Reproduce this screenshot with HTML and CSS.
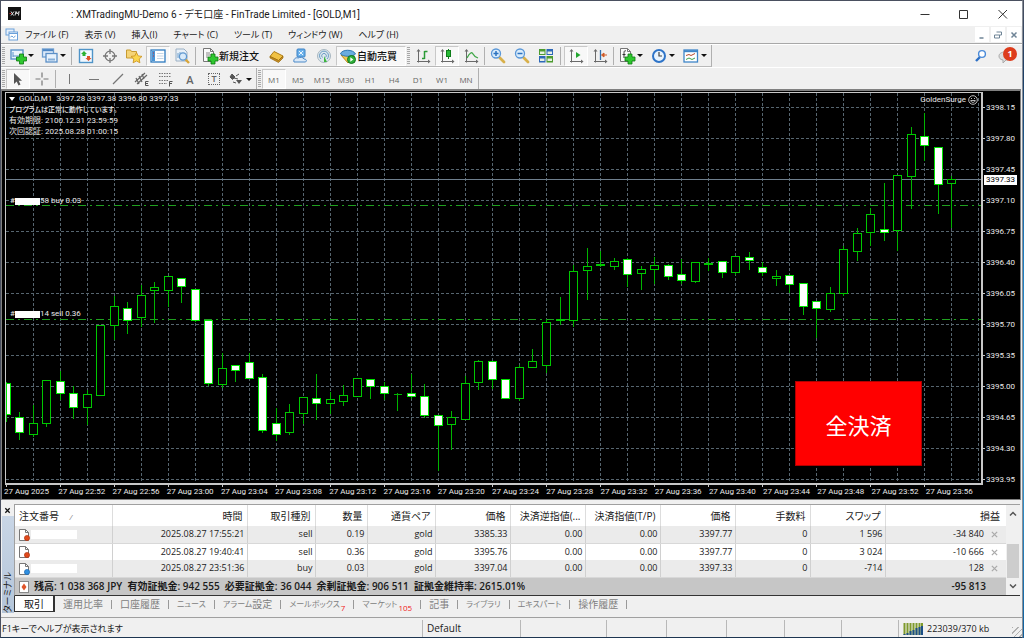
FILE: index.html
```html
<!DOCTYPE html>
<html lang="ja">
<head>
<meta charset="utf-8">
<title>XMTradingMU-Demo 6 - GOLD,M1</title>
<link rel="stylesheet" href="styles.css">
</head>
<body>
<svg class="defs" aria-hidden="true">
  <defs>
    <g id="plus"><path d="M9 7h4v3h3v4h-3v3H9v-3H6v-4h3z" fill="#2fc72f" stroke="#0c7a10" stroke-width=".8"/></g>
    <g id="axes"><path d="M4.500 3.500v12M3 14.500h12" fill="none" stroke="#6a6a6a"/><path d="M4.500 2l-2 2.500h4zM16.500 14.500l-2.500-2v4z" fill="#6a6a6a"/></g>
    <g id="sheet"><path d="M2.500 1.500h7l3 3v10h-10z" fill="#fafafa" stroke="#777"/><path d="M9.500 1.500v3h3" fill="none" stroke="#777"/></g>
    <g id="lens"><path d="M10.500 10.500l4.500 4.500" stroke="#d8b04a" stroke-width="2.800" stroke-linecap="round"/><circle cx="7" cy="6.500" r="4.500" fill="#d9ecfb" stroke="#5a97d8" stroke-width="1.300"/></g>
  </defs>
</svg>
<div class="window">
  <header class="titlebar">
    <svg class="logo" viewBox="0 0 13 13"><rect width="13" height="13" fill="#111"/><path d="M3 4.500l2.500 4M6 4.500l-3 4M7 8.500l1-4 1 2.500 2-2.500-.5 4" stroke="#ddd" fill="none"/><path d="M1.500 6.500h1.500" stroke="#d22"/></svg>
    <h1 class="title">: XMTradingMU-Demo 6 - デモ口座 - FinTrade Limited - [GOLD,M1]</h1>
    <div class="winbtns">
      <button aria-label="最小化"><svg viewBox="0 0 12 12"><path d="M1.500 6.500h9"/></svg></button>
      <button aria-label="最大化"><svg viewBox="0 0 12 12"><path d="M1.500 2.500h8v8h-8z"/></svg></button>
      <button aria-label="閉じる"><svg viewBox="0 0 12 12"><path d="M1.500 2l8.500 8.500M10 2L1.500 10.500"/></svg></button>
    </div>
  </header>

  <nav class="menubar">
    <svg class="mdi-icon" viewBox="0 0 13 13"><rect x="1" y="1" width="8" height="6" fill="#e8f1fb" stroke="#6aa0da"/><rect x="4" y="4" width="8.500" height="8" fill="#fff" stroke="#6aa0da"/><path d="M4 5.500h8" stroke="#6aa0da"/><path d="M5.500 9l1.500-1 1.500 1.500 2-1.500" fill="none" stroke="#6aa0da"/></svg>
    <button>ファイル (F)</button><button>表示 (V)</button><button>挿入(I)</button><button>チャート (C)</button><button>ツール (T)</button><button>ウィンドウ (W)</button><button>ヘルプ (H)</button>
    <div class="mdi-btns">
      <button aria-label="最小化"><svg viewBox="0 0 12 12"><path d="M3.500 9h4" stroke-width="1.500"/></svg></button>
      <button aria-label="元に戻す"><svg viewBox="0 0 12 12"><path d="M4.500 3h5v3h-2M2.500 6h5v3h-5z"/></svg></button>
      <button aria-label="閉じる"><svg viewBox="0 0 12 12"><path d="M3.500 3.500l5 5M8.500 3.500l-5 5" stroke-width="1.500"/></svg></button>
    </div>
  </nav>

  <div class="toolbar-row">
    <div class="toolbar">
      <span class="grip"></span>
      <button class="tool drop" aria-label="新規チャート"><svg viewBox="0 0 18 18"><rect x="2" y="3" width="12" height="9" fill="#eaf3fc" stroke="#5b93c9" stroke-width="1.400"/><path d="M4 10V5M4 9h8" stroke="#5b93c9"/><use href="#plus" x="1.500"/></svg></button>
      <button class="tool drop" aria-label="チャートの組表示"><svg viewBox="0 0 18 18"><rect x="1.500" y="2" width="11" height="8" fill="#dceafa" stroke="#6b9ccf" stroke-width="1.300"/><path d="M2 3.200h10" stroke="#4d86c4" stroke-width="2"/><rect x="5" y="6.500" width="11" height="8.500" fill="#e6f1fc" stroke="#5b8fc7" stroke-width="1.300"/><path d="M7 12.500h7" stroke="#86aed8" stroke-width="2"/></svg></button>
      <span class="sep"></span>
      <button class="tool" aria-label="気配値表示"><svg viewBox="0 0 18 18"><rect x="2.500" y="2.500" width="13" height="13" fill="#f2f9ff" stroke="#4f94c8" stroke-width="1.400"/><path d="M7 4l3 3H8.500v2h-3V7H4z" fill="#2cb234"/><path d="M11.500 14l-3-3H10V9h3v2h1.500z" fill="#e0542a"/></svg></button>
      <button class="tool" aria-label="データウィンドウ"><svg viewBox="0 0 18 18"><circle cx="9" cy="9" r="4.800" fill="none" stroke="#777" stroke-width="1.300"/><path d="M9 2v5M9 11v5M2 9h5M11 9h5" stroke="#777" stroke-width="1.300"/></svg></button>
      <button class="tool" aria-label="ナビゲーター"><svg viewBox="0 0 18 18"><path d="M1.500 3h4l1 1.500h5V11h-10z" fill="#f5d477" stroke="#c79b31"/><path d="M11.500 5.500l1.700 3.400 3.800.5-2.800 2.600.7 3.800-3.400-1.800-3.400 1.800.7-3.800L6 9.400l3.800-.5z" fill="#fbd64e" stroke="#c98f1b" stroke-width=".8"/></svg></button>
      <button class="tool pressed" aria-label="ターミナル"><svg viewBox="0 0 18 18"><rect x="2" y="3" width="14" height="12" fill="#fff" stroke="#2f7cc0" stroke-width="1.300"/><rect x="3" y="4" width="3" height="10" fill="#4a95d6"/><path d="M8 6.500h6.500M8 9h6.500M8 11.500h6.500" stroke="#c4d6e6"/><path d="M4 6h1M4 9h1" stroke="#c33"/></svg></button>
      <button class="tool" aria-label="ストラテジーテスター"><svg viewBox="0 0 18 18"><path d="M3 2h8l3 3v9H3z" fill="#e8f0f8" stroke="#9bb0c4"/><path d="M5 11V6M7 9V5" stroke="#6fa0cc"/><path d="M12.500 12.500l3.500 3.500" stroke="#d8a63a" stroke-width="2.400"/><circle cx="10" cy="9.500" r="3.600" fill="#d8eafa" stroke="#5e97cf" stroke-width="1.300"/></svg></button>
      <span class="sep"></span>
      <button class="tool text"><svg viewBox="0 0 18 18"><use href="#sheet"/><path d="M5 6h4M5 8h5M5 10h2" stroke="#888"/><use href="#plus" x="1"/></svg>新規注文</button>
      <button class="tool" aria-label="MetaEditor"><svg viewBox="0 0 18 18"><path d="M3 9.500l4-5 9 4.500-4.500 4.500z" fill="#f1c245" stroke="#ae7c16"/><path d="M3 9.500v1.500l8.500 4.500L16 11V9l-4.500 4.500z" fill="#c88e22" stroke="#96680f" stroke-width=".7"/></svg></button>
      <button class="tool" aria-label="コミュニティ"><svg viewBox="0 0 18 18"><rect x="6" y="2" width="8" height="8" rx="1" fill="#6cb1ea" stroke="#3d82c4"/><path d="M8 4l4 4M12 4L8 8" stroke="#e9f5ff"/><path d="M3 15c-1-3 2-5 4-4 2-1 5-1 6 1 3 0 3 3 1 3z" fill="#dbe9f7" stroke="#4b89c8"/></svg></button>
      <button class="tool" aria-label="シグナル"><svg viewBox="0 0 18 18"><circle cx="9" cy="9" r="6.500" fill="#dde8ee" stroke="#a7b6c0"/><path d="M6 12a4.500 4.500 0 1 1 6 0M7.500 10.500a2.300 2.300 0 1 1 3 0" fill="none" stroke="#6c9cc4"/><path d="M9 9l3 6H9z" fill="#3eb53e"/></svg></button>
      <button class="tool text pressed auto"><svg viewBox="0 0 18 18"><path d="M2 8l7 8 6-8z" fill="#f3c94e" stroke="#b88a1e"/><path d="M1.500 7c1-5 13-5 15 0-3 3-12 3-15 0z" fill="#6aade0" stroke="#2f78b4"/><circle cx="12.500" cy="12.500" r="4" fill="#2fb13a" stroke="#13751c"/><path d="M11.300 10.300l3 2.200-3 2.200z" fill="#fff"/></svg>自動売買</button>
      <span class="grip"></span>
      <button class="tool" aria-label="バーチャート"><svg viewBox="0 0 18 18"><use href="#axes"/><path d="M10.500 4v8M10.500 4.500h3M8 11.500h2.500" stroke="#2a9a35" stroke-width="1.500"/></svg></button>
      <button class="tool pressed" aria-label="ローソク足"><svg viewBox="0 0 18 18"><use href="#axes"/><path d="M10.500 2v10" stroke="#0e7d19"/><rect x="8.500" y="3.500" width="4" height="6" fill="#27b935" stroke="#0e7d19"/></svg></button>
      <button class="tool" aria-label="ラインチャート"><svg viewBox="0 0 18 18"><use href="#axes"/><path d="M5 11c3-6 5-6 6-4s2 3 5 4" fill="none" stroke="#3da645" stroke-width="1.300"/></svg></button>
      <span class="sep thin"></span>
      <button class="tool" aria-label="拡大"><svg viewBox="0 0 18 18"><use href="#lens"/><path d="M4.500 6.500h5M7 4v5" stroke="#2c72c0" stroke-width="1.500"/></svg></button>
      <button class="tool" aria-label="縮小"><svg viewBox="0 0 18 18"><use href="#lens"/><path d="M4.500 6.500h5" stroke="#2c72c0" stroke-width="1.500"/></svg></button>
      <button class="tool" aria-label="整列"><svg viewBox="0 0 18 18"><path d="M2 2h6.500v6H2zM9.500 9H16v6.500H9.500z" fill="#4c9b2f"/><path d="M9.500 2H16v6H9.500zM2 9h6.500v6.500H2z" fill="#2d68b8"/><path d="M3 4.500h4.500V7H3zM10.500 4.500H15V7h-4.500zM3 11.500h4.500V14H3zM10.500 11.500H15V14h-4.500z" fill="#e7f0e4"/></svg></button>
      <span class="sep wide"></span>
      <button class="tool pressed" aria-label="自動スクロール"><svg viewBox="0 0 18 18"><use href="#axes"/><path d="M9 5l4.500 3L9 11z" fill="#23a630"/></svg></button>
      <button class="tool" aria-label="チャートシフト"><svg viewBox="0 0 18 18"><use href="#axes"/><path d="M9.500 3v10" stroke="#2f6fad" stroke-width="1.300"/><path d="M10.500 8l2.500-2v4zM12 8h4" fill="#cf5a27" stroke="#cf5a27"/></svg></button>
      <span class="sep thin"></span>
      <button class="tool drop" aria-label="インディケーター"><svg viewBox="0 0 18 18"><use href="#sheet"/><path d="M8 4c-2-1-2 1-2 3v4M4.500 7.500h3" fill="none" stroke="#333"/><use href="#plus" x="1"/></svg></button>
      <button class="tool drop" aria-label="時間足"><svg viewBox="0 0 18 18"><circle cx="9" cy="9" r="6" fill="#e8f4ff" stroke="#2e74c8" stroke-width="2"/><path d="M9 5v4h3" fill="none" stroke="#444" stroke-width="1.200"/></svg></button>
      <button class="tool drop" aria-label="テンプレート"><svg viewBox="0 0 18 18"><rect x="2" y="3" width="13.500" height="12" fill="#fff" stroke="#3f86c8" stroke-width="1.300"/><path d="M2 4.200h13.500" stroke="#3f86c8" stroke-width="2"/><path d="M4 8.500l3-1 2 1 4-2" fill="none" stroke="#b5482a"/><path d="M4 12.500l3-1.500 3 1.500 3-1.500" fill="none" stroke="#3ba04a"/></svg></button>
    </div>
    <div class="toolbar-right">
      <button aria-label="検索"><svg viewBox="0 0 14 14"><path d="M6 8l-4 4" stroke="#2d6fc4" stroke-width="2.400"/><circle cx="8" cy="5" r="3.400" fill="#fff" stroke="#4a8ad8" stroke-width="1.400"/></svg></button>
      <button class="chat" aria-label="通知 1件"><svg viewBox="0 0 14 14"><path d="M7 3c4 0 6 1.500 6 4s-2 4-5 4l-3 3v-3C2 10.500 1 9 1 7s2-4 6-4z" fill="#ddd" stroke="#aaa"/></svg><span class="badge">1</span></button>
    </div>
  </div>

  <div class="toolbar-row second">
    <div class="toolbar">
      <span class="grip"></span>
      <button class="tool pressed" aria-label="カーソル"><svg viewBox="0 0 18 18"><path d="M5 3v11l2.700-2.500 1.800 4 2-1-1.800-3.700H13z" fill="#555"/></svg></button>
      <button class="tool" aria-label="クロスヘア"><svg viewBox="0 0 18 18"><path d="M9 2.500v5M9 10.500v5M2.500 9h5M10.500 9h5" stroke="#777" stroke-width="1.200"/></svg></button>
      <span class="sep"></span>
      <button class="tool" aria-label="垂直線"><svg viewBox="0 0 18 18"><path d="M8.500 4v10" stroke="#777"/></svg></button>
      <button class="tool" aria-label="水平線"><svg viewBox="0 0 18 18"><path d="M4 9.500h10" stroke="#777"/></svg></button>
      <button class="tool" aria-label="トレンドライン"><svg viewBox="0 0 18 18"><path d="M4 14L14 4" stroke="#777" stroke-width="1.200"/></svg></button>
      <button class="tool" aria-label="チャネル"><svg viewBox="0 0 18 18"><path d="M2 12L12 3M4 14L14 5M3 8l3 6M6 6l3 6M9 4l2 5" stroke="#666" stroke-width="1.200"/><path d="M15.500 11.500h-3v4h3M12.500 13.500h2.500" fill="none" stroke="#555"/></svg></button>
      <button class="tool" aria-label="フィボナッチ"><svg viewBox="0 0 18 18"><path d="M2 3.500h12M2 6.500h12M2 10.500h9M2 13.500h8" stroke="#777" stroke-dasharray="1.500 1"/><path d="M15.500 11.500h-3v5M12.500 13.500h2.500" fill="none" stroke="#555"/></svg></button>
      <button class="tool glyph" aria-label="テキスト">A</button>
      <button class="tool glyph" aria-label="テキストラベル"><span class="tbox">T</span></button>
      <button class="tool drop" aria-label="矢印"><svg viewBox="0 0 18 18"><path d="M5 4l3 3-2.500 2.500L3 7zM7 8l4 1" fill="#555" stroke="#555"/><path d="M9 10h6l-3 4z" fill="#555"/><path d="M9 6l3-2M6 12l3 1" stroke="#555"/></svg></button>
    </div>
    <div class="toolbar frames">
      <span class="grip"></span>
      <button class="tool pressed">M1</button><button class="tool">M5</button><button class="tool">M15</button><button class="tool">M30</button><button class="tool">H1</button><button class="tool">H4</button><button class="tool">D1</button><button class="tool">W1</button><button class="tool">MN</button>
    </div>
  </div>

  <main class="chart">
    <div class="plot">
      <svg id="candles" role="img" aria-label="GOLD 1分足チャート"></svg>
      <div class="info">
        <div class="info-head"><span class="tri"></span>GOLD,M1&nbsp; 3397.28 3397.38 3396.80 3397.33</div>
        <div class="info-ja">プログラムは正常に動作しています。</div>
        <div>有効期限: 2100.12.31 23:59:59</div>
        <div>次回認証: 2025.08.28 01:00:15</div>
      </div>
      <div class="expert">GoldenSurge <svg viewBox="0 0 10 10"><circle cx="5" cy="5" r="4.300"/><path d="M3 3.500h1M6 3.500h1M2.700 5.500c.5 2.500 4 2.500 4.600 0z"/></svg></div>
      <div class="order buy">#<span class="mask"></span>58 buy 0.03</div>
      <div class="order sell">#<span class="mask"></span>14 sell 0.36</div>
      <button class="close-all">全決済</button>
    </div>
    <div class="prices">
      <span>3398.15</span><span>3397.80</span><span>3397.45</span><span>3397.10</span><span>3396.75</span><span>3396.40</span><span>3396.05</span><span>3395.70</span><span>3395.35</span><span>3395.00</span><span>3394.65</span><span>3394.30</span><span>3393.95</span>
      <b class="current">3397.33</b>
    </div>
    <div class="times">
      <span>27 Aug 2025</span><span>27 Aug 22:52</span><span>27 Aug 22:56</span><span>27 Aug 23:00</span><span>27 Aug 23:04</span><span>27 Aug 23:08</span><span>27 Aug 23:12</span><span>27 Aug 23:16</span><span>27 Aug 23:20</span><span>27 Aug 23:24</span><span>27 Aug 23:28</span><span>27 Aug 23:32</span><span>27 Aug 23:36</span><span>27 Aug 23:40</span><span>27 Aug 23:44</span><span>27 Aug 23:48</span><span>27 Aug 23:52</span><span>27 Aug 23:56</span>
    </div>
  </main>

  <section class="terminal">
    <aside class="side">
      <button aria-label="閉じる"><svg viewBox="0 0 8 8"><path d="M1.500 1.500l5 5M6.500 1.500l-5 5" stroke="#111" stroke-width="1.500"/></svg></button>
      <div class="side-label"><span>ターミナル</span></div>
    </aside>
    <div class="panel">
      <div class="grid-wrap">
        <table>
          <colgroup><col class="c-id"><col class="c-time"><col class="c-type"><col class="c-lot"><col class="c-type"><col class="c-num"><col class="c-num"><col class="c-num"><col class="c-num"><col class="c-num"><col class="c-num"><col></colgroup>
          <thead><tr><th>注文番号 <i>/</i></th><th>時間</th><th>取引種別</th><th>数量</th><th>通貨ペア</th><th>価格</th><th>決済逆指値(...</th><th>決済指値(T/P)</th><th>価格</th><th>手数料</th><th>スワップ</th><th>損益</th></tr></thead>
          <tbody>
            <tr><td><svg class="doc" viewBox="0 0 14 14"><path d="M2.500 1.500h6l3 3v8h-9z" fill="#fff" stroke="#777"/><path d="M8.500 1.500v3h3" fill="none" stroke="#777"/><circle cx="10" cy="10" r="2.600" fill="#e04a1c" stroke="#a82c08" stroke-width=".6"/></svg><span class="mask"></span></td><td>2025.08.27 17:55:21</td><td>sell</td><td>0.19</td><td>gold</td><td>3385.33</td><td>0.00</td><td>0.00</td><td>3397.77</td><td>0</td><td>1 596</td><td>-34 840<button aria-label="決済"><svg viewBox="0 0 8 8"><path d="M1 1l6 6M7 1L1 7"/></svg></button></td></tr>
            <tr><td><svg class="doc" viewBox="0 0 14 14"><path d="M2.500 1.500h6l3 3v8h-9z" fill="#fff" stroke="#777"/><path d="M8.500 1.500v3h3" fill="none" stroke="#777"/><circle cx="10" cy="10" r="2.600" fill="#e04a1c" stroke="#a82c08" stroke-width=".6"/></svg></td><td>2025.08.27 19:40:41</td><td>sell</td><td>0.36</td><td>gold</td><td>3395.76</td><td>0.00</td><td>0.00</td><td>3397.77</td><td>0</td><td>3 024</td><td>-10 666<button aria-label="決済"><svg viewBox="0 0 8 8"><path d="M1 1l6 6M7 1L1 7"/></svg></button></td></tr>
            <tr><td><svg class="doc" viewBox="0 0 14 14"><path d="M2.500 1.500h6l3 3v8h-9z" fill="#fff" stroke="#777"/><path d="M8.500 1.500v3h3" fill="none" stroke="#777"/><circle cx="10" cy="10" r="2.600" fill="#2f8fe0" stroke="#1560a8" stroke-width=".6"/></svg><span class="mask"></span></td><td>2025.08.27 23:51:36</td><td>buy</td><td>0.03</td><td>gold</td><td>3397.04</td><td>0.00</td><td>0.00</td><td>3397.33</td><td>0</td><td>-714</td><td>128<button aria-label="決済"><svg viewBox="0 0 8 8"><path d="M1 1l6 6M7 1L1 7"/></svg></button></td></tr>
          </tbody>
          <tfoot><tr><td colspan="11"><svg class="doc" viewBox="0 0 14 14"><rect x="2.500" y="1.500" width="9" height="11" fill="#fff" stroke="#888"/><path d="M7 3.500L9.500 7 7 10.500 4.500 7z" fill="#e0542a"/></svg><span class="sum">残高: 1 038 368 JPY&nbsp; 有効証拠金: 942 555&nbsp; 必要証拠金: 36 044&nbsp; 余剰証拠金: 906 511&nbsp; 証拠金維持率: 2615.01%</span></td><td>-95 813</td></tr></tfoot>
        </table>
        <div class="scroll"><svg viewBox="0 0 8 8"><path d="M1 5.500l3-3 3 3"/></svg><span class="thumb"></span><svg viewBox="0 0 8 8"><path d="M1 2.500l3 3 3-3"/></svg></div>
      </div>
      <div class="tabs" role="tablist">
        <button role="tab" aria-selected="true">取引</button><button role="tab">運用比率</button><button role="tab">口座履歴</button><button role="tab"><span class="kana">ニュース</span></button><button role="tab"><span class="kana">アラーム</span>設定</button><button role="tab"><span class="kana">メールボックス</span><sub>7</sub></button><button role="tab"><span class="kana">マーケット</span><sub>105</sub></button><button role="tab">記事</button><button role="tab"><span class="kana">ライブラリ</span></button><button role="tab"><span class="kana">エキスパート</span></button><button role="tab">操作履歴</button>
      </div>
    </div>
  </section>

  <footer class="status">
    <span class="help">F1キーでヘルプが表示されます</span><span class="profile">Default</span><span></span><span></span><span></span><span></span><span></span><span></span>
    <span class="net"><svg viewBox="0 0 20 12"><path d="M1.500 0v12M4.500 0v12M7.500 0v12M10.500 0v12M13.500 0v12M16.500 0v12M19 0v12" stroke="#7f9a2c" stroke-width="2"/><path d="M1.500 11v1M4.500 10v2M7.500 8v4M10.500 7v5M13.500 5v7M16.500 4v8M19 3v9" stroke="#1c4f86" stroke-width="2"/></svg>223039/370 kb</span>
  </footer>
</div>
<script src="chart.js"></script>
</body>
</html>
```
FILE: styles.css
```css
* { box-sizing: border-box; }
body {
  margin: 0;
  min-height: 100vh;
  display: flex;
  background: linear-gradient(#4a5060, #1c3f66 12%, #1a7cc0 40%, #3a9fd8 70%, #0f5f9c);
  font-family: "Open Sans", "Noto Sans CJK JP", sans-serif;
  font-feature-settings: "palt";
  font-size: 9px;
  color: #1a1a1a;
}
button { margin: 0; padding: 0; border: 0; background: none; font: inherit; font-feature-settings: inherit; color: inherit; white-space: nowrap; }
svg { display: block; flex: none; }
.defs { position: absolute; width: 0; height: 0; }
.window {
  flex: 1;
  display: flex;
  flex-direction: column;
  min-width: 0;
  margin-right: 1px;
  background: #f0f0f0;
  border: 1px solid #4a5060;
  border-right-color: #8a8f98;
  border-bottom-color: #1d3550;
}

/* title and menu */
.titlebar { display: flex; align-items: center; height: 25px; padding-left: 7px; background: #fff; }
.logo { width: 13px; height: 13px; }
.title { flex: 1; margin: 0 0 0 50px; font-family: Roboto, "Noto Sans CJK JP", sans-serif; font-size: 10px; font-weight: 400; }
.winbtns { display: flex; gap: 27px; padding-right: 13px; }
.winbtns svg { width: 12px; height: 12px; fill: none; stroke: #333; }
.menubar { display: flex; align-items: center; height: 18px; padding-left: 4px; border-bottom: 1px solid #a8a8a8; }
.mdi-icon { width: 13px; height: 13px; margin-right: 7px; }
.menubar > button { margin-right: 16px; line-height: 16px; }
.mdi-btns { display: flex; gap: 2px; margin-left: auto; padding-right: 1px; }
.mdi-btns button { width: 14px; height: 15px; padding: 1px; background: #fff; }
.mdi-btns svg { width: 12px; height: 12px; fill: none; stroke: #6f8496; }

/* toolbars */
.toolbar-row { display: flex; align-items: flex-start; justify-content: space-between; height: 23px; border-top: 1px solid #fff; }
.toolbar-row.second { justify-content: flex-start; height: 22px; }
.toolbar { display: flex; align-items: center; height: 22px; border-right: 1px solid #b0b0b0; border-bottom: 1px solid #b8b8b8; }
.second .toolbar { border-bottom: 0; }
.grip { width: 3px; height: 18px; margin: 0 1px; background: repeating-linear-gradient(#a8a8a8 0 1px, #f0f0f0 1px 2px); }
.sep { width: 1px; height: 18px; margin: 0 2px 0 1px; background: #b0b0b0; }
.sep.thin { margin: 0 1px; }
.sep.wide { margin: 0 3px 0 2px; }
.tool { display: flex; align-items: center; justify-content: center; width: 24px; height: 20px; color: #666; }
.tool svg { width: 18px; height: 18px; }
.tool.pressed { background: #f8f8f8; border: 1px solid #c8c8c8; border-right-color: #fff; border-bottom-color: #fff; }
.tool.drop { justify-content: flex-start; width: 32px; padding-left: 3px; }
.second .tool.drop { width: 30px; padding-left: 1px; }
.tool.drop::after { content: ""; margin-left: 1px; border: 3px solid transparent; border-top-color: #111; border-bottom: 0; }
.tool.text { justify-content: flex-start; width: 66px; padding-left: 3px; font-size: 10px; font-weight: 500; color: #111; }
.tool.text.auto { width: 70px; padding-left: 2px; }
.tool.glyph { font-size: 11px; font-weight: 600; }
.tbox { padding: 0 2px; border: 1px dotted #666; font-size: 9px; line-height: 10px; }
.frames { font-size: 8px; }
.toolbar-right { display: flex; gap: 10px; padding: 4px 5px 0 0; }
.toolbar-right svg { width: 14px; height: 14px; }
.chat { position: relative; width: 19px; }
.badge { position: absolute; top: -2px; right: 0; width: 14px; height: 14px; border-radius: 50%; background: #dd3c1c; color: #fff; font-size: 9px; font-weight: 700; line-height: 14px; text-align: center; }

/* chart */
.chart {
  flex: 1;
  display: grid;
  grid-template: minmax(300px, 1fr) 14px / 1fr 37px;
  margin-right: 1px;
  padding: 1px 0 0 3px;
  background: #000;
  border: solid #808080;
  border-width: 2px 1px 1px 1px;
  font-family: Roboto, "Noto Sans CJK JP", sans-serif;
  font-size: 8px;
  color: #e8e8e8;
}
.plot { position: relative; border: 1px solid #c8c8c8; border-width: 1px 2px 2px 1px; }
#candles { position: absolute; inset: 0; width: 100%; height: 100%; overflow: visible; shape-rendering: crispEdges; }
.grid { stroke: #56656f; stroke-dasharray: 3 2; }
.bid { stroke: #6f7f8d; }
.level { stroke: #1fa01f; stroke-dasharray: 8 4 2 4; }
.tick { stroke: #c8c8c8; }
.wick { stroke: #00b400; }
.body { fill: #000; stroke: #00c800; }
.body.down { fill: #fff; stroke: #00e600; }
.info { position: absolute; top: 0; left: 3px; line-height: 11px; }
.info-head { display: flex; align-items: center; line-height: 12px; }
.tri { margin-right: 4px; border: 3px solid transparent; border-top: 4px solid #fff; border-bottom: 0; }
.info-ja { font-size: 7px; line-height: 10px; font-weight: 500; }
.expert { position: absolute; top: 1px; right: 3px; display: flex; align-items: center; gap: 2px; line-height: 12px; }
.expert svg { width: 10px; height: 10px; fill: none; stroke: #e8e8e8; stroke-width: .8; }
.order { position: absolute; left: 4px; display: flex; align-items: center; line-height: 10px; }
.order.buy { bottom: 71%; }
.order.sell { bottom: 42%; }
.order .mask { width: 25px; height: 7px; background: #fff; }
.close-all { position: absolute; right: 59px; bottom: 17px; width: 127px; height: 85px; background: #f00; border: 1px solid #b00000; color: #fff; font-size: 22px; font-feature-settings: normal; }
.prices { position: relative; display: flex; flex-direction: column; justify-content: space-between; padding: 11px 0 0 3px; }
.prices span { line-height: 10px; }
.current { position: absolute; top: 21%; left: 1px; padding: 0 2px; background: #fff; color: #000; font-weight: 400; line-height: 10px; }
.times { grid-column: 1 / -1; display: grid; grid-template-columns: repeat(18, 1fr); margin: 0 40px 0 -1px; line-height: 14px; white-space: nowrap; }

/* terminal */
.terminal { display: flex; margin: 4px 2px 0 1px; }
.side { display: flex; flex-direction: column; width: 12px; }
.side button { height: 12px; padding-left: 2px; }
.side svg { width: 7px; height: 7px; }
.side-label { flex: 1; display: flex; align-items: flex-end; margin-bottom: 4px; background: linear-gradient(#c9d6e6, #b4c5d9); font-size: 9px; line-height: 12px; }
.side-label span { writing-mode: vertical-rl; text-orientation: sideways; transform: rotate(180deg); }
.panel { flex: 1; min-width: 0; }
.grid-wrap { display: flex; border: solid #a0a0a0; border-width: 1px 0 0 1px; border-bottom: 1px solid #333; background: #fff; }
table { flex: 1; width: 100%; table-layout: fixed; border-collapse: collapse; }
.c-id { width: 97px; } .c-time { width: 135px; } .c-type { width: 68px; } .c-lot { width: 52px; } .c-num { width: 75px; }
th { height: 21px; padding: 0 4px; border-right: 1px solid #ddd; font-size: 10px; font-weight: 400; text-align: right; white-space: nowrap; }
th:first-child, td:first-child { text-align: left; }
th i { margin-left: 8px; font-size: 8px; color: #888; }
td { height: 17px; padding: 0 2px; border-right: 1px solid #d0d0d0; text-align: right; white-space: nowrap; line-height: 16px; }
td:last-child, th:last-child { border-right: 0; }
tr:nth-child(odd) td { background: #ebebeb; border-bottom: 1px solid #d8d8d8; }
td:last-child { padding-right: 4px; }
th:last-child { padding-right: 6px; }
.doc { display: inline-block; width: 14px; height: 14px; vertical-align: middle; }
td .mask { display: inline-block; width: 46px; height: 9px; background: #fff; vertical-align: middle; }
td button { margin-left: 7px; padding-right: 4px; vertical-align: middle; }
td button svg { width: 7px; height: 7px; stroke: #aaa; stroke-width: 1.500; }
tfoot tr:nth-child(odd) td { height: 18px; background: #c6c6c6; border: 0; font-size: 10px; font-weight: 600; }
tfoot td:last-child { padding-right: 20px; }
.sum { margin-left: 3px; }
.scroll { display: flex; flex-direction: column; align-items: center; width: 14px; padding: 5px 0; background: #f0f0f0; }
.scroll svg { width: 8px; height: 8px; fill: none; stroke: #555; stroke-width: 1.500; }
.thumb { width: 12px; height: 34px; margin: auto 0 4px; background: #cdcdcd; }
.tabs { display: flex; align-items: flex-start; height: 21px; }
.tabs button { display: flex; align-items: center; height: 16px; padding: 0 0 0 8px; font-size: 10px; line-height: 16px; color: #808080; }
.tabs button::after { content: ""; width: 1px; height: 9px; margin-left: 8px; background: #999; }
.tabs [aria-selected] { padding: 0 9px; background: #fff; border: solid #333; border-width: 0 2px 1px 1px; color: #111; }
.tabs [aria-selected]::after { display: none; }
.kana { font-size: 8px; }
.tabs sub { align-self: flex-end; margin-left: 1px; font-size: 8px; line-height: 8px; color: #f02020; }

/* status bar */
.status { display: grid; grid-template-columns: 1fr 98px 86px 60px 60px 58px 57px 57px 124px; height: 20px; padding-top: 2px; border-top: 1px solid #a0a0a0; line-height: 17px; }
.status span { border-left: 1px solid #b8b8b8; padding-left: 4px; }
.status .help { border: 0; padding-left: 1px; }
.profile { font-size: 10px; }
.status .net { display: flex; align-items: center; gap: 4px; background: repeating-linear-gradient(135deg, #b0b0b0 0 1px, transparent 1px 4px) right bottom / 10px 10px no-repeat; }
.net svg { width: 20px; height: 12px; }
```
FILE: chart.js
```js
// [high, body top, body bottom, low, closed down]
const bars = [
  [289,291,322,329,1],[319,325,340,347,1],[312,331,342,344,0],[287,288,331,334,0],[278,289,301,307,1],
  [293,301,315,326,1],[297,302,315,332,0],[232,233,303,303,0],[203,214,233,247,0],[209,216,228,241,1],
  [192,203,225,234,0],[189,195,198,230,0],[184,184,198,214,0],[186,186,194,210,1],[196,197,228,229,1],
  [227,228,291,293,1],[260,276,292,295,0],[273,273,278,289,1],[260,270,286,286,1],[281,285,338,340,1],
  [315,331,342,348,1],[311,320,340,342,0],[305,305,321,331,0],[281,306,311,327,1],[299,307,311,321,0],
  [292,303,309,313,0],[286,286,304,304,0],[287,287,294,306,1],[289,294,301,307,1],[300,302,302,318,0],
  [281,301,304,306,1],[291,304,323,325,1],[323,323,333,378,1],[318,325,332,357,0],[283,291,327,327,0],
  [267,269,290,297,0],[268,269,287,296,1],[287,287,306,306,1],[272,275,306,308,0],[256,269,275,275,0],
  [226,230,273,280,0],[204,227,228,232,0],[172,179,228,234,0],[155,174,178,207,0],[158,172,173,174,0],
  [165,169,174,177,0],[165,167,182,194,1],[173,177,181,197,0],[164,173,177,191,0],[171,173,184,187,1],
  [166,182,188,191,1],[170,170,189,190,0],[165,171,172,178,0],[169,169,180,185,1],[163,164,180,182,0],
  [159,165,168,177,1],[169,175,180,183,1],[177,184,186,193,0],[183,183,192,200,1],[191,191,214,222,1],
  [208,209,216,245,1],[194,201,217,219,0],[153,157,201,203,0],[135,141,159,168,0],[115,122,140,153,0],
  [90,137,140,148,1],[83,83,138,158,0],[34,42,84,116,0],[20,44,53,68,1],[55,55,92,121,1],[83,87,91,135,0]
];
const svg = document.getElementById('candles');
const add = (tag, attrs) => {
  const el = document.createElementNS('http://www.w3.org/2000/svg', tag);
  for (const key in attrs) el.setAttribute(key, attrs[key]);
  svg.append(el);
};
const line = (cls, x1, y1, x2, y2) => add('line', { class: cls, x1, y1, x2, y2 });

// Data is in units of a 977 x 391 field; every edge is snapped to a device pixel.
function draw() {
  const { width: w, height: h } = svg.getBoundingClientRect();
  const px = i => Math.round(i * 13.54 * w / 977 - 0.5) + 0.5;
  const py = v => Math.round(v * (h + 1) / 391 - 1) + 0.5;
  svg.replaceChildren();

  for (let i = 2; px(i) < w; i += 2) line('grid', px(i), 0, px(i), h);
  for (let i = 0; i < 13; i++) {
    const y = py(15 + i * 31);
    line('grid', 0, y, w, y);
    line('tick', w + 1, y, w + 4, y);
  }
  for (let i = 0; i < 72; i += 4) line('tick', px(i), h + 1, px(i), h + 4);
  line('bid', 0, py(87), w, py(87));
  line('level', 0, py(113), w, py(113));
  line('level', 0, py(227), w, py(227));

  bars.forEach(([high, top, bottom, low, down], i) => {
    const x = px(i);
    const left = Math.max(x - 4, 0.5);
    line('wick', x, py(high), x, py(low));
    if (bottom === top) line('wick', left, py(top), x + 4, py(top));
    else add('rect', { class: down ? 'body down' : 'body', x: left, y: py(top), width: x + 4 - left, height: py(bottom) - py(top) });
  });
}
new ResizeObserver(draw).observe(svg);
draw();
```
